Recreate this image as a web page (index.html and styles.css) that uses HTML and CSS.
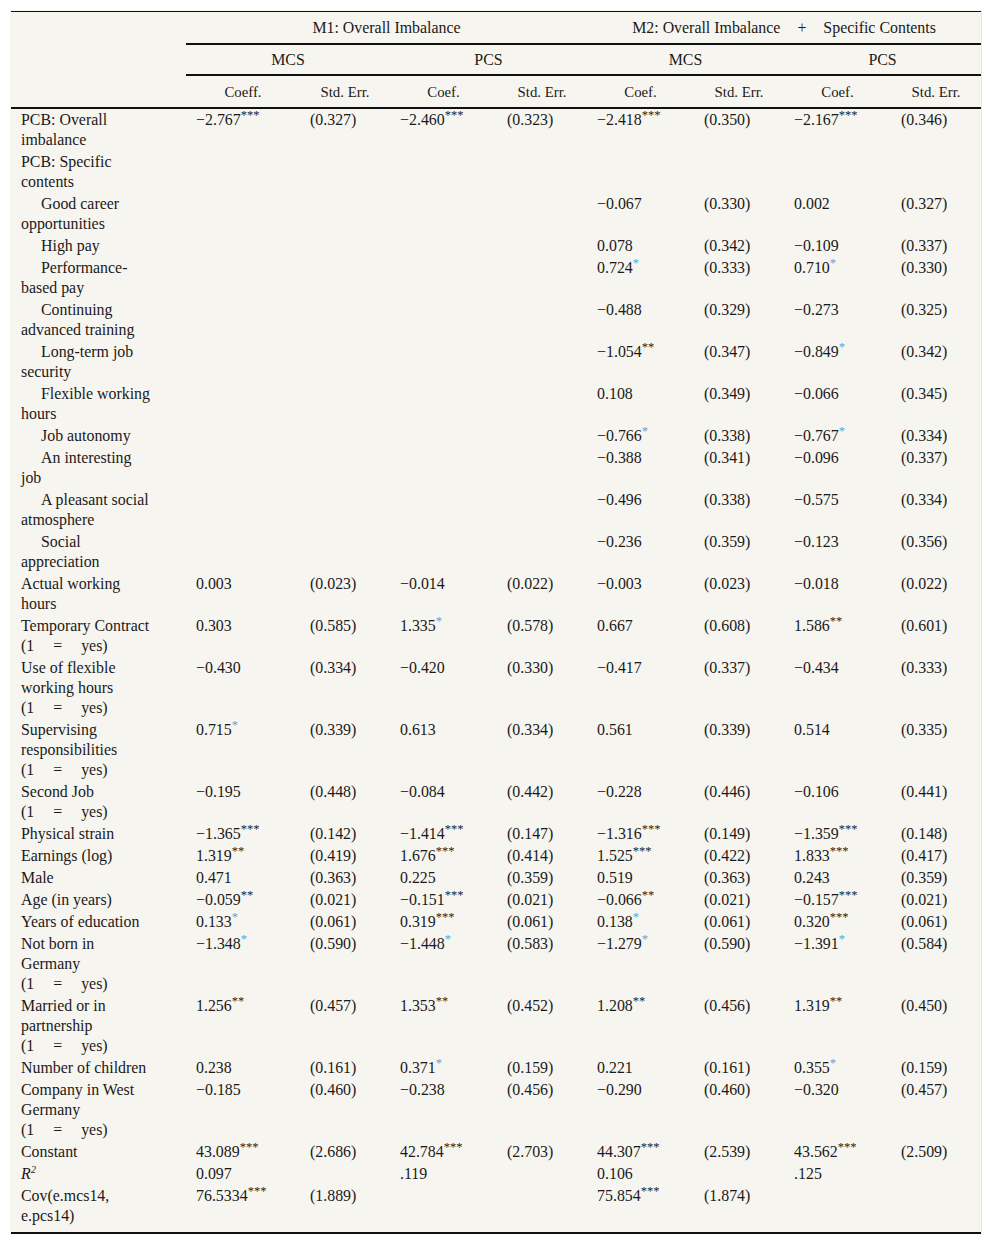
FILE: index.html
```html
<!DOCTYPE html>
<html>
<head>
<meta charset="utf-8">
<link rel="stylesheet" href="styles.css">
</head>
<body>
<div class="wrap">
<table class="reg">
<colgroup>
<col class="c-label"><col class="c-first"><col class="c-se"><col class="c-coef"><col class="c-se"><col class="c-coef"><col class="c-se"><col class="c-coef"><col class="c-se">
</colgroup>
<thead>
<tr class="h1">
<th></th>
<th colspan="4">M1: Overall Imbalance</th>
<th colspan="4">M2: Overall Imbalance<span class="wide"> + </span>Specific Contents</th>
</tr>
<tr class="h2">
<th></th>
<th colspan="2">MCS</th>
<th colspan="2">PCS</th>
<th colspan="2">MCS</th>
<th colspan="2">PCS</th>
</tr>
<tr class="h3">
<th></th>
<th>Coeff.</th><th>Std. Err.</th><th>Coef.</th><th>Std. Err.</th><th>Coef.</th><th>Std. Err.</th><th>Coef.</th><th>Std. Err.</th>
</tr>
</thead>
<tbody>
<tr><td>PCB: Overall<br>imbalance</td><td>−2.767<sup>***</sup></td><td>(0.327)</td><td>−2.460<sup>***</sup></td><td>(0.323)</td><td>−2.418<sup>***</sup></td><td>(0.350)</td><td>−2.167<sup>***</sup></td><td>(0.346)</td></tr>
<tr><td>PCB: Specific<br>contents</td><td></td><td></td><td></td><td></td><td></td><td></td><td></td><td></td></tr>
<tr><td class="ind">Good career<br>opportunities</td><td></td><td></td><td></td><td></td><td>−0.067</td><td>(0.330)</td><td>0.002</td><td>(0.327)</td></tr>
<tr><td class="ind">High pay</td><td></td><td></td><td></td><td></td><td>0.078</td><td>(0.342)</td><td>−0.109</td><td>(0.337)</td></tr>
<tr><td class="ind">Performance-<br>based pay</td><td></td><td></td><td></td><td></td><td>0.724<sup class="s1">*</sup></td><td>(0.333)</td><td>0.710<sup class="s1">*</sup></td><td>(0.330)</td></tr>
<tr><td class="ind">Continuing<br>advanced training</td><td></td><td></td><td></td><td></td><td>−0.488</td><td>(0.329)</td><td>−0.273</td><td>(0.325)</td></tr>
<tr><td class="ind">Long-term job<br>security</td><td></td><td></td><td></td><td></td><td>−1.054<sup>**</sup></td><td>(0.347)</td><td>−0.849<sup class="s1">*</sup></td><td>(0.342)</td></tr>
<tr><td class="ind">Flexible working<br>hours</td><td></td><td></td><td></td><td></td><td>0.108</td><td>(0.349)</td><td>−0.066</td><td>(0.345)</td></tr>
<tr><td class="ind">Job autonomy</td><td></td><td></td><td></td><td></td><td>−0.766<sup class="s1">*</sup></td><td>(0.338)</td><td>−0.767<sup class="s1">*</sup></td><td>(0.334)</td></tr>
<tr><td class="ind">An interesting<br>job</td><td></td><td></td><td></td><td></td><td>−0.388</td><td>(0.341)</td><td>−0.096</td><td>(0.337)</td></tr>
<tr><td class="ind">A pleasant social<br>atmosphere</td><td></td><td></td><td></td><td></td><td>−0.496</td><td>(0.338)</td><td>−0.575</td><td>(0.334)</td></tr>
<tr><td class="ind">Social<br>appreciation</td><td></td><td></td><td></td><td></td><td>−0.236</td><td>(0.359)</td><td>−0.123</td><td>(0.356)</td></tr>
<tr><td>Actual working<br>hours</td><td>0.003</td><td>(0.023)</td><td>−0.014</td><td>(0.022)</td><td>−0.003</td><td>(0.023)</td><td>−0.018</td><td>(0.022)</td></tr>
<tr><td>Temporary Contract<br><span class="yes">(1 = yes)</span></td><td>0.303</td><td>(0.585)</td><td>1.335<sup class="s1">*</sup></td><td>(0.578)</td><td>0.667</td><td>(0.608)</td><td>1.586<sup>**</sup></td><td>(0.601)</td></tr>
<tr><td>Use of flexible<br>working hours<br><span class="yes">(1 = yes)</span></td><td>−0.430</td><td>(0.334)</td><td>−0.420</td><td>(0.330)</td><td>−0.417</td><td>(0.337)</td><td>−0.434</td><td>(0.333)</td></tr>
<tr><td>Supervising<br>responsibilities<br><span class="yes">(1 = yes)</span></td><td>0.715<sup class="s1">*</sup></td><td>(0.339)</td><td>0.613</td><td>(0.334)</td><td>0.561</td><td>(0.339)</td><td>0.514</td><td>(0.335)</td></tr>
<tr><td>Second Job<br><span class="yes">(1 = yes)</span></td><td>−0.195</td><td>(0.448)</td><td>−0.084</td><td>(0.442)</td><td>−0.228</td><td>(0.446)</td><td>−0.106</td><td>(0.441)</td></tr>
<tr><td>Physical strain</td><td>−1.365<sup>***</sup></td><td>(0.142)</td><td>−1.414<sup>***</sup></td><td>(0.147)</td><td>−1.316<sup>***</sup></td><td>(0.149)</td><td>−1.359<sup>***</sup></td><td>(0.148)</td></tr>
<tr><td>Earnings (log)</td><td>1.319<sup>**</sup></td><td>(0.419)</td><td>1.676<sup>***</sup></td><td>(0.414)</td><td>1.525<sup>***</sup></td><td>(0.422)</td><td>1.833<sup>***</sup></td><td>(0.417)</td></tr>
<tr><td>Male</td><td>0.471</td><td>(0.363)</td><td>0.225</td><td>(0.359)</td><td>0.519</td><td>(0.363)</td><td>0.243</td><td>(0.359)</td></tr>
<tr><td>Age (in years)</td><td>−0.059<sup>**</sup></td><td>(0.021)</td><td>−0.151<sup>***</sup></td><td>(0.021)</td><td>−0.066<sup>**</sup></td><td>(0.021)</td><td>−0.157<sup>***</sup></td><td>(0.021)</td></tr>
<tr><td>Years of education</td><td>0.133<sup class="s1">*</sup></td><td>(0.061)</td><td>0.319<sup>***</sup></td><td>(0.061)</td><td>0.138<sup class="s1">*</sup></td><td>(0.061)</td><td>0.320<sup>***</sup></td><td>(0.061)</td></tr>
<tr><td>Not born in<br>Germany<br><span class="yes">(1 = yes)</span></td><td>−1.348<sup class="s1">*</sup></td><td>(0.590)</td><td>−1.448<sup class="s1">*</sup></td><td>(0.583)</td><td>−1.279<sup class="s1">*</sup></td><td>(0.590)</td><td>−1.391<sup class="s1">*</sup></td><td>(0.584)</td></tr>
<tr><td>Married or in<br>partnership<br><span class="yes">(1 = yes)</span></td><td>1.256<sup>**</sup></td><td>(0.457)</td><td>1.353<sup>**</sup></td><td>(0.452)</td><td>1.208<sup>**</sup></td><td>(0.456)</td><td>1.319<sup>**</sup></td><td>(0.450)</td></tr>
<tr><td>Number of children</td><td>0.238</td><td>(0.161)</td><td>0.371<sup class="s1">*</sup></td><td>(0.159)</td><td>0.221</td><td>(0.161)</td><td>0.355<sup class="s1">*</sup></td><td>(0.159)</td></tr>
<tr><td>Company in West<br>Germany<br><span class="yes">(1 = yes)</span></td><td>−0.185</td><td>(0.460)</td><td>−0.238</td><td>(0.456)</td><td>−0.290</td><td>(0.460)</td><td>−0.320</td><td>(0.457)</td></tr>
<tr><td>Constant</td><td>43.089<sup>***</sup></td><td>(2.686)</td><td>42.784<sup>***</sup></td><td>(2.703)</td><td>44.307<sup>***</sup></td><td>(2.539)</td><td>43.562<sup>***</sup></td><td>(2.509)</td></tr>
<tr><td><i>R</i><sup class="sq">2</sup></td><td>0.097</td><td></td><td>.119</td><td></td><td>0.106</td><td></td><td>.125</td><td></td></tr>
<tr class="last"><td>Cov(e.mcs14,<br>e.pcs14)</td><td>76.5334<sup>***</sup></td><td>(1.889)</td><td></td><td></td><td>75.854<sup>***</sup></td><td>(1.874)</td><td></td><td></td></tr>
</tbody>
</table>
</div>
</body>
</html>
```
FILE: styles.css
```css
html, body {
  margin: 0;
  padding: 0;
  background: #ffffff;
}
.wrap {
  margin: 10px 0 0 10px;
  width: 972px;
  padding: 1px 0 0 1px;
  box-sizing: border-box;
  background: #f7f5f0;
  border-right: 1px solid #e8e6e1;
}
.reg {
  width: 970px;
  table-layout: fixed;
  border-collapse: collapse;
  font-family: "Liberation Serif", "Times New Roman", serif;
  font-size: 15.9px;
  color: #1a1a1a;
  border-top: 1px solid #111;
  border-bottom: 2px solid #111;
}
.c-label { width: 175px; }
.c-first { width: 114px; }
.c-coef { width: 107px; }
.c-se { width: 90px; }
.reg th {
  font-weight: normal;
  text-align: center;
  vertical-align: middle;
  padding: 0 10px;
  line-height: 20px;
  white-space: nowrap;
}
.h1 th { height: 31px; }
.h2 th { height: 29px; }
.h3 th { height: 31px; }
.h1 th[colspan], .h2 th[colspan] {
  border-bottom: 2px solid #111;
}
.h3 th {
  border-bottom: 2px solid #111;
  font-size: 14.8px;
}
.reg td {
  padding: 1px 10px;
  line-height: 20px;
  vertical-align: top;
  text-align: left;
  white-space: nowrap;
}
.reg td.ind { text-indent: 20px; }
.reg tr.last td { padding-bottom: 6px; }
.yes { word-spacing: 15px; }
.wide { word-spacing: 13px; }
sup {
  font-size: 12.5px;
  line-height: 0;
  vertical-align: 6px;
  color: #222;
  letter-spacing: 0;
}
sup.s1 { color: #4fa9dc; }
sup.sq { font-style: italic; color: #1a1a1a; font-size: 10.5px; vertical-align: 6px; }
```
